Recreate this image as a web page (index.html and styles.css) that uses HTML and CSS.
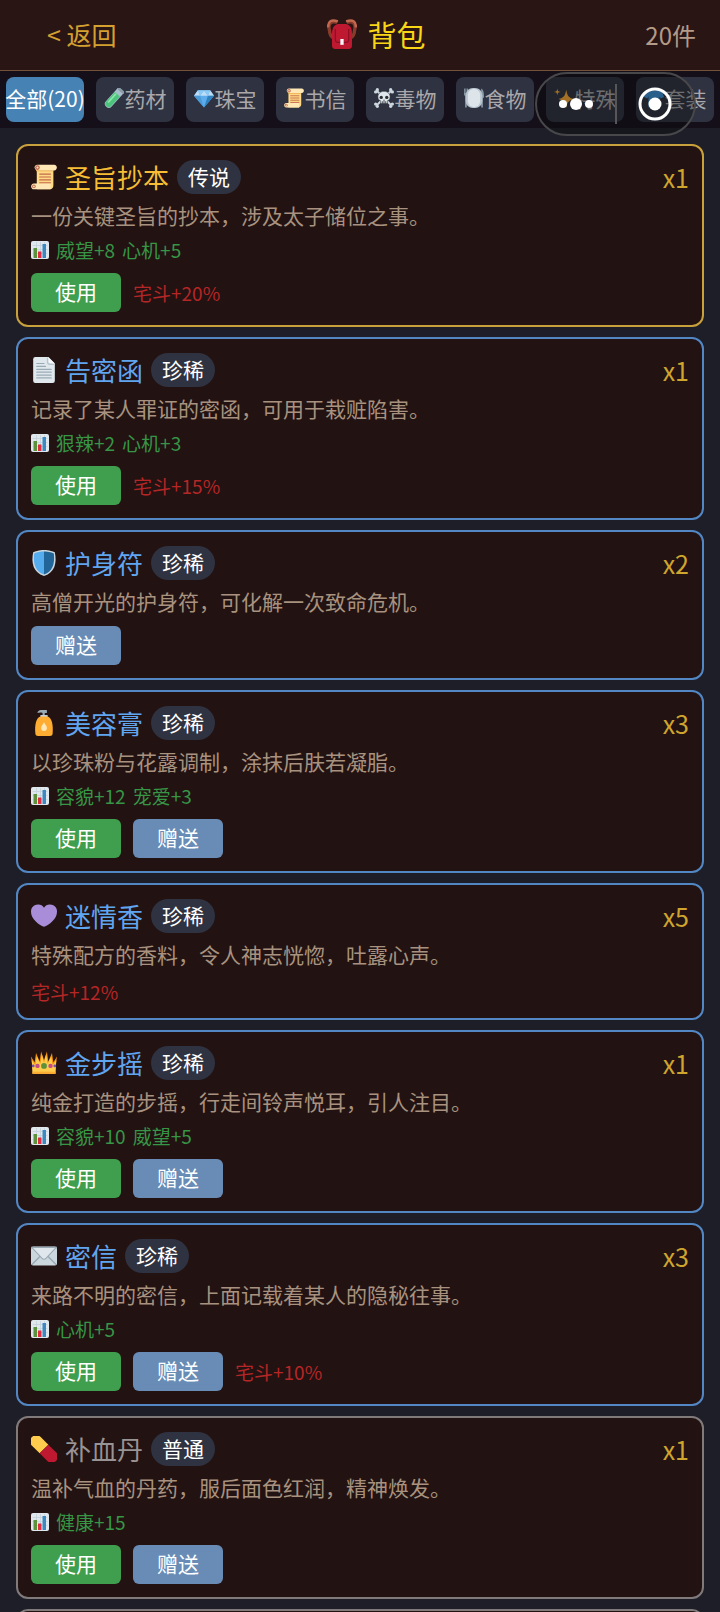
FILE: index.html
```html
<!DOCTYPE html>
<html lang="zh-CN">
<head>
<meta charset="utf-8">
<meta name="viewport" content="width=device-width, initial-scale=1">
<title>背包</title>
<link rel="stylesheet" href="styles.css">
</head>
<body>
<svg class="sprite" aria-hidden="true">
  <symbol id="i-scroll" viewBox="0 0 36 36">
    <path fill="#ffd983" d="M8 4h23v25c0 3-1 5-4 6H8z"/>
    <path fill="#e39f3d" d="M7 8h23v2H7z"/>
    <path fill="#ffe8b6" d="M32 1H9C6 1 5 3 5 5s2 4 4 4h23c5 0 5-8 0-8z"/>
    <circle cx="9" cy="5" r="3.2" fill="#c1694f"/><circle cx="9" cy="5" r="1.4" fill="#ffe8b6"/>
    <path fill="#ffe8b6" d="M27 27H4c-5 0-5 8 0 8h23z"/>
    <circle cx="4" cy="31" r="2.5" fill="#c1694f"/><circle cx="4" cy="31" r="1.2" fill="#ffe8b6"/>
    <path stroke="#c1694f" stroke-width="1.6" stroke-linecap="round" d="M12 14h15M12 18h15M12 22h15M12 26h15"/>
  </symbol>
  <symbol id="i-page" viewBox="0 0 36 36">
    <path fill="#e1e8ed" d="M6 0h18l9 9v24a3 3 0 0 1-3 3H6a3 3 0 0 1-3-3V3a3 3 0 0 1 3-3z"/>
    <path fill="#b8c5cd" d="M22 0v8a3 3 0 0 0 3 3h8z"/>
    <path fill="#f5f8fa" d="M24 0v7a2 2 0 0 0 2 2h7z"/>
    <path stroke="#99aab5" stroke-width="1.7" stroke-linecap="round" d="M8 9h10M8 13h12M8 17h20M8 21h20M8 25h20M8 29h20"/>
  </symbol>
  <symbol id="i-shield" viewBox="0 0 36 36">
    <path fill="#ccd6dd" d="M33 3c-7-3-15-3-15-3S10 0 3 3C0 18 3 31 18 36 33 31 36 18 33 3z"/>
    <path fill="#55acee" d="M18 33.9C6 29.700 2.800 19 4.400 4.700 10.400 2 18 2 18 2z"/>
    <path fill="#226699" d="M18 33.900C30 29.700 33.200 19 31.600 4.700 25.600 2 18 2 18 2z"/>
  </symbol>
  <symbol id="i-lotion" viewBox="0 0 36 36">
    <path fill="#99aab5" d="M9 4c0-2 2-4 5-4h8v4h-3v6h-3V4c-3-1-5 0-7 0z"/>
    <path fill="#ccd6dd" d="M13 7h10v4H13z"/>
    <path fill="#ffac33" d="M13 9h10c6 2 8 12 7 23 0 3-1 4-4 4H10c-3 0-4-1-4-4C5 21 7 11 13 9z"/>
    <path fill="#ffe8b6" d="M18 17c2 4 4 5 4 8a4 4 0 0 1-8 0c0-3 2-4 4-8z"/>
  </symbol>
  <symbol id="i-heart" viewBox="0 0 36 36">
    <path fill="#aa8dd8" d="M36 12a9.800 9.800 0 0 0-18-5.500A9.800 9.800 0 0 0 0 12c0 10 11 18.500 18 21 7-2.500 18-11 18-21z"/>
  </symbol>
  <symbol id="i-crown" viewBox="0 0 36 36">
    <path fill="#f4900c" d="m3 30-3-21 5 8 2-13 5 12 2-14 4 12 4-12 2 14 5-12 2 13 5-8-3 21z"/>
    <path fill="#ffcc4d" d="M2 33 1 14l5 7 2-12 5 10 2-13 3 12 3-12 2 13 5-10 2 12 5-7-1 19z"/>
    <path fill="#ffac33" d="M2 30h32v3H2z"/>
    <circle cx="18" cy="22" r="4" fill="#5c913b"/><circle cx="9" cy="22" r="3" fill="#c44d85"/><circle cx="27" cy="22" r="3" fill="#c44d85"/>
    <circle cx="3" cy="22" r="2" fill="#7450a8"/><circle cx="33" cy="22" r="2" fill="#7450a8"/>
  </symbol>
  <symbol id="i-mail" viewBox="0 0 36 36">
    <rect y="5" width="36" height="26" rx="3" fill="#ccd6dd"/>
    <path fill="none" stroke="#99aab5" stroke-width="2" d="m1 30 12-12M35 30 23 18"/>
    <path fill="#e1e8ed" stroke="#99aab5" stroke-width="1.500" d="M1 6h34L21 21c-2 2-4 2-6 0z"/>
  </symbol>
  <symbol id="i-pill" viewBox="0 0 36 36">
    <g transform="rotate(45 18 18)">
      <path fill="#ffcc4d" d="M18 9.500H3a8.500 8.500 0 0 0 0 17h15z"/>
      <path fill="#be1931" d="M18 9.500h15a8.500 8.500 0 0 1 0 17H18z"/>
    </g>
  </symbol>
  <symbol id="i-chart" viewBox="0 0 36 36">
    <rect width="36" height="36" rx="4" fill="#e1e8ed"/>
    <path stroke="#c3cfd8" stroke-width="1.500" d="M3 9h30M3 17h30M3 25h30M11 2v32M19 2v32M27 2v32"/>
    <path fill="#5c913b" d="M5 14h7v20H5z"/><path fill="#dd2e44" d="M14 21h7v13h-7z"/><path fill="#3b88c3" d="M23 6h7v28h-7z"/>
  </symbol>
  <symbol id="i-bag" viewBox="0 0 36 36">
    <path fill="none" stroke="#8a3a2b" stroke-width="4" d="M12 4C4 2 1 6 3 14c0 4 2 7 5 9M24 4c8-2 11 2 9 10 0 4-2 7-5 9"/>
    <path fill="none" stroke="#c1694f" stroke-width="3" d="M13 3C5 0 1 3 1.500 10M23 3c8-3 12 0 11.500 7"/>
    <path fill="#be1931" d="M13 6h10c5 1 7 6 7 11v14c0 4-1 5-5 5H11c-4 0-5-1-5-5V17c0-5 2-10 7-11z"/>
    <path fill="none" stroke="#8c1024" stroke-width="1.500" d="M10 12v13c0 2 1 3 3 3h10c2 0 3-1 3-3V12"/>
    <path fill="#f5f8fa" d="M16 24h4v7h-4z"/>
  </symbol>
  <symbol id="i-tube" viewBox="0 0 36 36">
    <g transform="rotate(42 18 18)">
      <path fill="#a9bccb" d="M11 0h14v32a7 7 0 0 1-14 0z"/>
      <path fill="#4dc47d" d="M12 9h12v23a6 6 0 0 1-12 0z"/>
      <path fill="#8ee8ab" d="M14 10h3v21h-3z"/>
      <rect x="10" y="-3" width="16" height="5" rx="2" fill="#899aa7"/>
    </g>
  </symbol>
  <symbol id="i-gem" viewBox="0 0 36 36">
    <path fill="#5dadec" d="M7 4h22l7 10-18 21L0 14z"/>
    <path fill="#bdddf4" d="m7 4 4 10H0zM18 4l7 10H11zM29 4l7 10H25z"/>
    <path fill="#8ccaf7" d="m7 4 11 0-7 10zM29 4H18l7 10z"/>
    <path fill="#2f82bf" d="M25 14h11L18 35z"/><path fill="#4a9bd8" d="M0 14h11l7 21z"/>
  </symbol>
  <symbol id="i-skull" viewBox="0 0 36 36">
    <g stroke="#ccd6dd" stroke-width="3.500"><path d="m5 5 26 26M31 5 5 31"/></g>
    <g fill="#ccd6dd"><circle cx="6" cy="3" r="3"/><circle cx="3" cy="7" r="3"/><circle cx="30" cy="3" r="3"/><circle cx="33" cy="7" r="3"/><circle cx="3" cy="29" r="3"/><circle cx="6" cy="33" r="3"/><circle cx="33" cy="29" r="3"/><circle cx="30" cy="33" r="3"/></g>
    <path fill="#e1e8ed" stroke="#2f3240" d="M18 6c7 0 11 5 11 10 0 4-2 6-5 7v5H12v-5c-3-1-5-3-5-7C7 11 11 6 18 6z"/>
    <circle cx="13" cy="17" r="3" fill="#292f33"/><circle cx="23" cy="17" r="3" fill="#292f33"/>
    <path stroke="#292f33" stroke-width="1.500" d="M15 24v4M18 21v7M21 24v4"/>
  </symbol>
  <symbol id="i-plate" viewBox="0 0 36 36">
    <path fill="#8899a6" d="M0 1h1.500v8h1V1H4v8h1V1h2v10c0 2-1 3-2 4v20H2V15c-1-1-2-2-2-4zM31 1c4 2 5 7 5 16l-2 1v17h-3z"/>
    <rect x="3" y="0" width="30" height="36" rx="13" fill="#b9c6d0"/>
    <rect x="7" y="2" width="22" height="32" rx="10" fill="#dde5eb"/>
  </symbol>
  <symbol id="i-sparkles" viewBox="0 0 36 36">
    <path fill="#ffac33" d="M22 3c2 11 4 14 14 17-10 3-12 6-14 16-2-10-4-13-14-16 10-3 12-6 14-17zM6 1c1 5 1 5 6 6-5 1-5 1-6 6-1-5-1-5-6-6 5-1 5-1 6-6z"/>
  </symbol>
  <symbol id="i-shirt" viewBox="0 0 36 36">
    <path fill="#3b94d9" d="M11 2c4 4 10 4 14 0l7 3 4 11-6 3-2-4v20H8V15l-2 4-6-3L4 5z"/>
  </symbol>
</svg>

<div class="app">
  <header class="header">
    <button class="back" type="button">&lt; 返回</button>
    <h1 class="title"><svg class="title-icon"><use href="#i-bag"/></svg>背包</h1>
    <span class="count">20件</span>
  </header>

  <nav class="tabs" aria-label="物品分类">
    <button class="tab active" type="button">全部(20)</button>
    <button class="tab" type="button"><svg class="tab-icon"><use href="#i-tube"/></svg>药材</button>
    <button class="tab" type="button"><svg class="tab-icon"><use href="#i-gem"/></svg>珠宝</button>
    <button class="tab" type="button"><svg class="tab-icon"><use href="#i-scroll"/></svg>书信</button>
    <button class="tab" type="button"><svg class="tab-icon"><use href="#i-skull"/></svg>毒物</button>
    <button class="tab" type="button"><svg class="tab-icon"><use href="#i-plate"/></svg>食物</button>
    <button class="tab" type="button"><svg class="tab-icon"><use href="#i-sparkles"/></svg>特殊</button>
    <button class="tab" type="button"><svg class="tab-icon"><use href="#i-shirt"/></svg>套装</button>
  </nav>

  <div class="capsule">
    <button class="capsule-btn" type="button" aria-label="更多"><svg class="dots" viewBox="0 0 36 14"><g fill="#fff"><circle cx="5" cy="7" r="4"/><circle cx="18" cy="7" r="6"/><circle cx="31" cy="7" r="4"/></g></svg></button>
    <button class="capsule-btn" type="button" aria-label="关闭"><svg class="ring" viewBox="0 0 34 34"><circle cx="17" cy="17" r="15" fill="none" stroke="#fff" stroke-width="3"/><circle cx="17" cy="17" r="6.500" fill="#fff"/></svg></button>
  </div>

  <main class="list">
    <article class="card legend">
      <div class="card-head"><svg class="item-icon"><use href="#i-scroll"/></svg><h2 class="name">圣旨抄本</h2><span class="badge">传说</span><span class="qty">x1</span></div>
      <p class="desc">一份关键圣旨的抄本，涉及太子储位之事。</p>
      <p class="stats"><svg class="stat-icon"><use href="#i-chart"/></svg><span>威望+8</span><span>心机+5</span></p>
      <div class="actions"><button class="btn use" type="button">使用</button><span class="scheme">宅斗+20%</span></div>
    </article>

    <article class="card rare">
      <div class="card-head"><svg class="item-icon"><use href="#i-page"/></svg><h2 class="name">告密函</h2><span class="badge">珍稀</span><span class="qty">x1</span></div>
      <p class="desc">记录了某人罪证的密函，可用于栽赃陷害。</p>
      <p class="stats"><svg class="stat-icon"><use href="#i-chart"/></svg><span>狠辣+2</span><span>心机+3</span></p>
      <div class="actions"><button class="btn use" type="button">使用</button><span class="scheme">宅斗+15%</span></div>
    </article>

    <article class="card rare">
      <div class="card-head"><svg class="item-icon"><use href="#i-shield"/></svg><h2 class="name">护身符</h2><span class="badge">珍稀</span><span class="qty">x2</span></div>
      <p class="desc">高僧开光的护身符，可化解一次致命危机。</p>
      <div class="actions"><button class="btn gift" type="button">赠送</button></div>
    </article>

    <article class="card rare">
      <div class="card-head"><svg class="item-icon"><use href="#i-lotion"/></svg><h2 class="name">美容膏</h2><span class="badge">珍稀</span><span class="qty">x3</span></div>
      <p class="desc">以珍珠粉与花露调制，涂抹后肤若凝脂。</p>
      <p class="stats"><svg class="stat-icon"><use href="#i-chart"/></svg><span>容貌+12</span><span>宠爱+3</span></p>
      <div class="actions"><button class="btn use" type="button">使用</button><button class="btn gift" type="button">赠送</button></div>
    </article>

    <article class="card rare">
      <div class="card-head"><svg class="item-icon"><use href="#i-heart"/></svg><h2 class="name">迷情香</h2><span class="badge">珍稀</span><span class="qty">x5</span></div>
      <p class="desc">特殊配方的香料，令人神志恍惚，吐露心声。</p>
      <div class="actions"><span class="scheme">宅斗+12%</span></div>
    </article>

    <article class="card rare">
      <div class="card-head"><svg class="item-icon"><use href="#i-crown"/></svg><h2 class="name">金步摇</h2><span class="badge">珍稀</span><span class="qty">x1</span></div>
      <p class="desc">纯金打造的步摇，行走间铃声悦耳，引人注目。</p>
      <p class="stats"><svg class="stat-icon"><use href="#i-chart"/></svg><span>容貌+10</span><span>威望+5</span></p>
      <div class="actions"><button class="btn use" type="button">使用</button><button class="btn gift" type="button">赠送</button></div>
    </article>

    <article class="card rare">
      <div class="card-head"><svg class="item-icon"><use href="#i-mail"/></svg><h2 class="name">密信</h2><span class="badge">珍稀</span><span class="qty">x3</span></div>
      <p class="desc">来路不明的密信，上面记载着某人的隐秘往事。</p>
      <p class="stats"><svg class="stat-icon"><use href="#i-chart"/></svg><span>心机+5</span></p>
      <div class="actions"><button class="btn use" type="button">使用</button><button class="btn gift" type="button">赠送</button><span class="scheme">宅斗+10%</span></div>
    </article>

    <article class="card common">
      <div class="card-head"><svg class="item-icon"><use href="#i-pill"/></svg><h2 class="name">补血丹</h2><span class="badge">普通</span><span class="qty">x1</span></div>
      <p class="desc">温补气血的丹药，服后面色红润，精神焕发。</p>
      <p class="stats"><svg class="stat-icon"><use href="#i-chart"/></svg><span>健康+15</span></p>
      <div class="actions"><button class="btn use" type="button">使用</button><button class="btn gift" type="button">赠送</button></div>
    </article>

    <article class="card common"></article>
  </main>
</div>
</body>
</html>
```
FILE: styles.css
```css
* {
  box-sizing: border-box;
}

body {
  margin: 0;
  background: #1e1e28;
  font-family: "Noto Sans CJK SC", "Noto Sans", sans-serif;
  color: #fff;
}

h1, h2, p {
  margin: 0;
  font-weight: 400;
}

button {
  border: 0;
  padding: 0;
  background: none;
  color: inherit;
  font-family: inherit;
  cursor: pointer;
}

svg {
  flex: none;
  overflow: visible;
}

.sprite {
  position: absolute;
  width: 0;
  height: 0;
}

.app {
  position: relative;
  display: flex;
  flex-direction: column;
  height: 100vh;
  overflow: hidden;
}

/* Header */
.header {
  display: flex;
  flex: none;
  align-items: center;
  height: 71px;
  padding: 0 24px 2px 47px;
  border-bottom: 1px solid #735039;
  background: #2a1515;
}

.back {
  color: #d4a030;
  font-size: 25px;
}

.title {
  display: flex;
  flex: 1;
  align-items: center;
  justify-content: center;
  gap: 10px;
  padding-right: 9px;
  color: #f8d616;
  font-size: 29px;
}

.title-icon {
  width: 30px;
  height: 30px;
}

.count {
  color: #b49a88;
  font-size: 24px;
}

/* Category tabs */
.tabs {
  display: flex;
  flex: none;
  gap: 12px;
  padding: 6px;
  background: #140f19;
}

.tab {
  display: flex;
  flex: 1 1 0;
  align-items: center;
  justify-content: center;
  gap: 1px;
  min-width: 0;
  height: 45px;
  padding-bottom: 3px;
  border-radius: 8px;
  background: #2f3240;
  color: #aaa8ab;
  font-size: 21px;
  white-space: nowrap;
}

.tab.active {
  background: #4682b4;
  color: #fff;
}

.tab-icon {
  width: 20px;
  height: 20px;
}

/* Floating capsule over the tabs */
.capsule {
  position: absolute;
  top: 72px;
  right: 24px;
  display: flex;
  align-items: center;
  width: 161px;
  height: 64px;
  border: 2px solid #48484b;
  border-radius: 32px;
  background: rgba(10, 12, 12, 0.38);
}

.capsule-btn {
  display: flex;
  flex: 1;
  align-items: center;
  justify-content: center;
  height: 40px;
}

.capsule-btn + .capsule-btn {
  border-left: 2px solid #57575a;
}

.dots {
  width: 36px;
  height: 14px;
}

.ring {
  width: 34px;
  height: 34px;
}

/* Item list */
.list {
  display: flex;
  flex: 1;
  flex-direction: column;
  gap: 10px;
  min-height: 0;
  padding: 16px 16px 0;
  overflow: hidden;
}

.card {
  flex: none;
  padding: 14px 13px 13px;
  border: 2px solid;
  border-radius: 12px;
  background: #221212;
}

.legend { border-color: #c9a13c; }
.rare { border-color: #5287c4; }
.common { border-color: #807a7b; }

.card-head {
  display: flex;
  align-items: center;
  gap: 8px;
  height: 34px;
}

.item-icon {
  width: 26px;
  height: 26px;
}

.name {
  font-size: 26px;
  line-height: 32px;
}

.legend .name { color: #f6bd35; }
.rare .name { color: #60a5f0; }
.common .name { color: #989394; }

.badge {
  padding: 0 11px 2px;
  border-radius: 17px;
  background: #2f3240;
  font-size: 21px;
  line-height: 32px;
}

.qty {
  margin-left: auto;
  color: #cfa52e;
  font-size: 25px;
  line-height: 34px;
}

.desc {
  margin-top: 6px;
  color: #a8927f;
  font-size: 21px;
  line-height: 30px;
}

.stats {
  display: flex;
  align-items: center;
  gap: 7px;
  margin-top: 7px;
  color: #379546;
  font-size: 19px;
  line-height: 26px;
}

.stat-icon {
  width: 18px;
  height: 18px;
}

.actions {
  display: flex;
  align-items: center;
  gap: 12px;
  margin-top: 10px;
}

.btn {
  height: 39px;
  padding: 0 24px 2px;
  border-radius: 6px;
  font-size: 21px;
  line-height: 37px;
}

.use { background: #3f9f4e; }
.gift { background: #688cb5; }

.scheme {
  color: #b52626;
  font-size: 19px;
  line-height: 26px;
}
```
